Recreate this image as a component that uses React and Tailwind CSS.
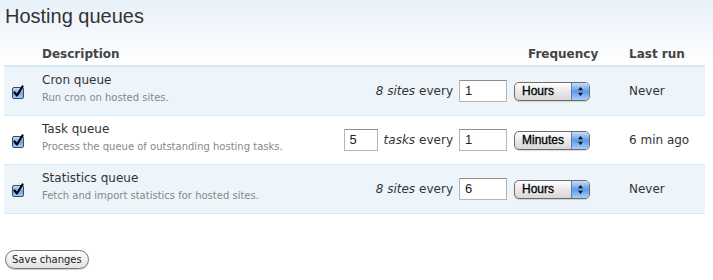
import React from "react";

const rows = [
  { name: "Cron queue", desc: "Run cron on hosted sites.", kind: "sites", count: "8", every: "1", unit: "Hours", last: "Never", shade: true },
  { name: "Task queue", desc: "Process the queue of outstanding hosting tasks.", kind: "tasks", count: "5", every: "1", unit: "Minutes", last: "6 min ago", shade: false },
  { name: "Statistics queue", desc: "Fetch and import statistics for hosted sites.", kind: "sites", count: "8", every: "6", unit: "Hours", last: "Never", shade: true },
];

const Checkbox = () => (
  <svg width="14" height="14" viewBox="0 0 14 14">
    <defs>
      <linearGradient id="cbg" x1="0" y1="0" x2="0" y2="1">
        <stop offset="0" stopColor="#cfe3fb" />
        <stop offset="0.5" stopColor="#6aa7ee" />
        <stop offset="1" stopColor="#a9d0fb" />
      </linearGradient>
    </defs>
    <rect x="1.5" y="2.5" width="11" height="11" rx="1.5" fill="url(#cbg)" stroke="#3a4a63" />
    <path d="M3.5 7.5 L6 10.5 L11.5 1.5" fill="none" stroke="#000" strokeWidth="2.2" strokeLinecap="round" strokeLinejoin="round" />
  </svg>
);

const TextBox = ({ value, w }) => (
  <div className={`${w} h-[22px] border border-[#b5b5b5] border-t-[#8e8e8e] bg-white pl-[5px] text-[13px] leading-[20px] text-[#222] font-['Liberation_Sans',sans-serif]`}>
    {value}
  </div>
);

const PopUp = ({ value }) => (
  <div className="flex h-[19px] w-[76px] overflow-hidden rounded-[5px] border border-[#6c6c6c] bg-gradient-to-b from-white via-[#e9e9e9] to-[#d7d7d7] shadow-[0_1px_1px_rgba(0,0,0,0.15)]">
    <span className="flex-1 pl-[7px] text-[12px] leading-[17px] text-[#000] font-['Liberation_Sans',sans-serif] [-webkit-text-stroke:0.3px_#000]">{value}</span>
    <span className="flex w-[18px] items-center justify-center border-l border-[#5e7fb3] bg-gradient-to-b from-[#c9def7] via-[#5a9ae8] to-[#a9cdf7]">
      <svg width="7" height="11" viewBox="0 0 7 11">
        <path d="M3.5 1 L6 4.2 L1 4.2 Z M3.5 10 L6 6.8 L1 6.8 Z" fill="#111" />
      </svg>
    </span>
  </div>
);

export default function App() {
  return (
    <div className="h-[280px] w-[713px] bg-[linear-gradient(to_bottom,#e8f1f8_0px,#f6f9fc_40px,#ffffff_70px)] font-['DejaVu_Sans',sans-serif] text-[#333]">
      <h1 className="pl-[5px] pt-[3px] text-[20px] leading-[26px] text-[#333] font-['Liberation_Sans',sans-serif]">Hosting queues</h1>

      <div className="ml-[4px] mt-[14px] w-[701px]">
        <div className="flex h-[24px] items-center border-b-2 border-[#d3e7f4] pb-[1px] text-[12px] font-bold text-[#444]">
          <span className="ml-[38px] flex-1">Description</span>
          <span className="w-[101px]">Frequency</span>
          <span className="w-[76px]">Last run</span>
        </div>

        {rows.map((r) => (
          <div key={r.name} className={`flex h-[49px] items-center border-b border-[#d3e7f4] ${r.shade ? "bg-[#edf5fb]" : "bg-white"}`}>
            <div className="flex w-[38px] pl-[7px] pt-[1px]">
              <Checkbox />
            </div>
            <div className="flex-1 self-start pt-[5px]">
              <div className="text-[12px] leading-[16px] text-[#333]">{r.name}</div>
              <div className="mt-[3px] text-[10px] leading-[14px] text-[#888]">{r.desc}</div>
            </div>
            <div className="flex items-center text-[12px] text-[#333]">
              {r.kind === "tasks" ? (
                <>
                  <TextBox value={r.count} w="w-[34px]" />
                  <span className="ml-[6px] italic">tasks</span>
                </>
              ) : (
                <span className="italic">{r.count} sites</span>
              )}
              <span className="ml-[4px] mr-[6px]">every</span>
              <TextBox value={r.every} w="w-[48px]" />
              <div className="ml-[7px]">
                <PopUp value={r.unit} />
              </div>
            </div>
            <div className="ml-[39px] w-[76px] text-[12px] text-[#333]">{r.last}</div>
          </div>
        ))}
      </div>

      <button className="ml-[5px] mt-[36px] h-[19px] rounded-full border border-[#777] bg-gradient-to-b from-white to-[#e2e2e2] px-[6px] text-[10px] leading-[16px] text-[#222] shadow-[0_1px_1px_rgba(0,0,0,0.2)] font-['DejaVu_Sans',sans-serif]">
        Save changes
      </button>
    </div>
  );
}
